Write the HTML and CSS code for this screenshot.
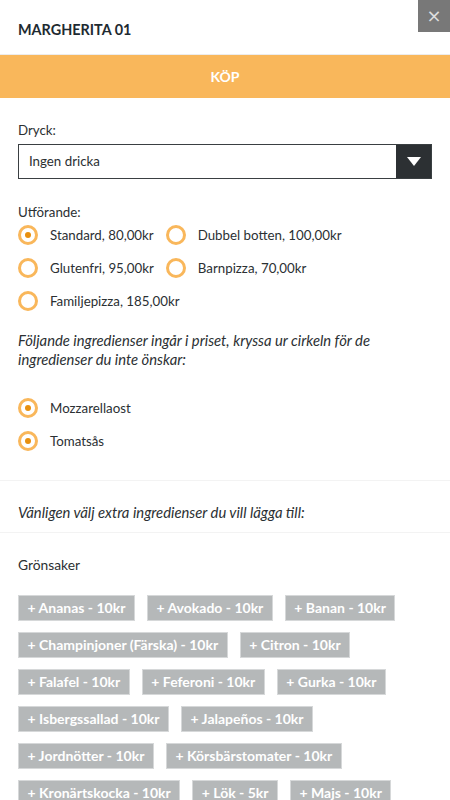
FILE: index.html
```html
<!DOCTYPE html>
<html lang="sv">
<head>
<meta charset="utf-8">
<link rel="stylesheet" href="styles.css">
</head>
<body>
<div class="modal">
  <header class="head">
    <h1 class="title">MARGHERITA 01</h1>
    <button class="close">&times;</button>
  </header>
  <div class="buy">KÖP</div>

  <section class="section">
    <div class="label">Dryck:</div>
    <div class="select">
      <span class="select-text">Ingen dricka</span>
      <span class="select-arrow"><svg width="14" height="9" viewBox="0 0 14 9"><path d="M0 0H14L7 9Z" fill="#fff"/></svg></span>
    </div>

    <div class="label label-2">Utförande:</div>
    <div class="radios">
      <div class="radio"><span class="dot on"></span>Standard, 80,00kr</div>
      <div class="radio"><span class="dot"></span>Dubbel botten, 100,00kr</div>
      <div class="radio"><span class="dot"></span>Glutenfri, 95,00kr</div>
      <div class="radio"><span class="dot"></span>Barnpizza, 70,00kr</div>
      <div class="radio"><span class="dot"></span>Familjepizza, 185,00kr</div>
    </div>

    <p class="note">Följande ingredienser ingår i priset, kryssa ur cirkeln för de ingredienser du inte önskar:</p>
    <div class="ingredients">
      <div class="radio"><span class="dot on"></span>Mozzarellaost</div>
      <div class="radio"><span class="dot on"></span>Tomatsås</div>
    </div>
  </section>

  <div class="extra-head">
    <p class="note">Vänligen välj extra ingredienser du vill lägga till:</p>
  </div>

  <section class="section extras">
    <div class="cat">Grönsaker</div>
    <div class="tags">
      <span class="tag">+ Ananas - 10kr</span>
      <span class="tag">+ Avokado - 10kr</span>
      <span class="tag">+ Banan - 10kr</span>
      <span class="tag">+ Champinjoner (Färska) - 10kr</span>
      <span class="tag">+ Citron - 10kr</span>
      <span class="tag">+ Falafel - 10kr</span>
      <span class="tag">+ Feferoni - 10kr</span>
      <span class="tag">+ Gurka - 10kr</span>
      <span class="tag">+ Isbergssallad - 10kr</span>
      <span class="tag">+ Jalapeños - 10kr</span>
      <span class="tag">+ Jordnötter - 10kr</span>
      <span class="tag">+ Körsbärstomater - 10kr</span>
      <span class="tag">+ Kronärtskocka - 10kr</span>
      <span class="tag">+ Lök - 5kr</span>
      <span class="tag">+ Majs - 10kr</span>
      <span class="tag">+ Oliver - 10kr</span>
      <span class="tag">+ Paprika - 10kr</span>
    </div>
  </section>
</div>
</body>
</html>
```

FILE: styles.css
```css
* { box-sizing: border-box; }
html, body { margin: 0; padding: 0; background: #fff; }
body {
  font-family: Lato, "Open Sans", sans-serif;
  font-size: 13.3px;
  color: #2b3033;
  overflow: hidden;
  height: 800px;
}
.modal { width: 450px; }
.head {
  position: relative;
  height: 55px;
  padding: 21px 18px 0;
  border-bottom: 1px solid #ececec;
}
.title {
  margin: 0;
  font-size: 14.4px;
  font-weight: 700;
  line-height: 17px;
  color: #1e2a31;
}
.close {
  position: absolute;
  top: 0;
  right: 0;
  width: 32px;
  height: 32px;
  border: 0;
  padding: 0;
  background: #787878;
  color: #dedede;
  font-family: "DejaVu Sans", sans-serif;
  font-size: 18px;
  line-height: 32px;
}
.buy {
  height: 43px;
  background: #f9b75b;
  color: #fff;
  font-weight: 700;
  font-size: 14px;
  line-height: 43px;
  text-align: center;
}
.section { padding: 0 18px; }
.label { margin-top: 23px; line-height: 18px; }
.label-2 { margin-top: 24px; }
.select {
  margin-top: 5px;
  height: 35px;
  border: 1px solid #3a3f42;
  display: flex;
  align-items: stretch;
}
.select-text { flex: 1; padding-left: 10px; line-height: 33px; }
.select-arrow {
  width: 35px;
  background: #2c3033;
  display: flex;
  align-items: center;
  justify-content: center;
}
.radios {
  display: flex;
  flex-wrap: wrap;
  column-gap: 12px;
  row-gap: 13px;
  margin-top: 4px;
}
.radio {
  display: flex;
  align-items: center;
  gap: 12px;
  height: 20px;
  line-height: 20px;
}
.dot {
  width: 20px;
  height: 20px;
  border-radius: 50%;
  border: 3.5px solid #f9b75b;
  background: #fff;
  display: flex;
  align-items: center;
  justify-content: center;
  flex: none;
}
.dot.on::after {
  content: "";
  width: 6px;
  height: 6px;
  border-radius: 50%;
  background: #e8900f;
}
.note {
  margin: 0;
  font-style: italic;
  font-size: 14.8px;
  line-height: 19px;
}
.section > .note { margin-top: 20px; }
.ingredients {
  display: flex;
  flex-direction: column;
  gap: 13px;
  margin-top: 29px;
  padding-bottom: 29px;
}
.extra-head {
  border-top: 1px solid #f3f3f3;
  border-bottom: 1px solid #f3f3f3;
  padding: 22px 18px 10px;
}
.cat { margin-top: 23px; line-height: 18px; font-size: 13.8px; }
.tags {
  display: flex;
  flex-wrap: wrap;
  column-gap: 12px;
  row-gap: 11px;
  margin-top: 21px;
}
.tag {
  display: inline-block;
  height: 26px;
  line-height: 24px;
  padding: 0 8.5px;
  background: #b5b8b9;
  border: 1px solid #d6d8d9;
  color: #fff;
  font-weight: 700;
  font-size: 14px;
}
```
